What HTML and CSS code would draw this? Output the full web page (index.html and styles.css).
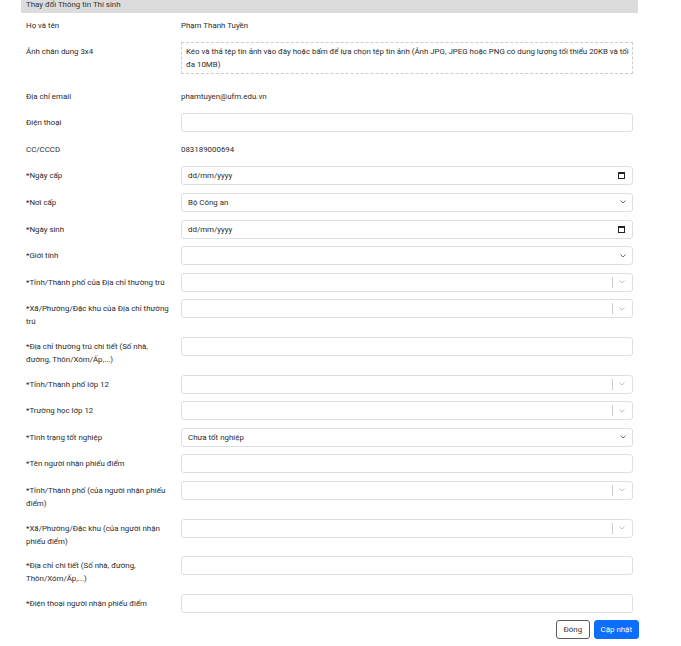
FILE: index.html
```html
<!DOCTYPE html>
<html>
<head>
<meta charset="utf-8">
<title>Thay đổi Thông tin Thí sinh</title>
<link rel="stylesheet" href="styles.css">
</head>
<body>
<div class="modal">
  <div class="modal-title">Thay đổi Thông tin Thí sinh</div>

  <div class="modal-body">
    <div class="row">
      <div class="label">Họ và tên</div>
      <div class="value">Phạm Thanh Tuyền</div>
    </div>
    <div class="row row-photo">
      <div class="label">Ảnh chân dung 3x4</div>
      <div class="dropzone">Kéo và thả tệp tin ảnh vào đây hoặc bấm để lựa chọn tệp tin ảnh (Ảnh JPG, JPEG hoặc PNG có dung lượng tối thiểu 20KB và tối đa 10MB)</div>
    </div>
    <div class="row">
      <div class="label">Địa chỉ email</div>
      <div class="value">phamtuyen@ufm.edu.vn</div>
    </div>
    <div class="row">
      <div class="label">Điện thoại</div>
      <div class="field"></div>
    </div>
    <div class="row">
      <div class="label">CC/CCCD</div>
      <div class="value">083189000694</div>
    </div>
    <div class="row">
      <div class="label">*Ngày cấp</div>
      <div class="field">
        <span class="field-text">dd/mm/yyyy</span>
        <svg class="icon-date" width="7" height="7" viewBox="0 0 7 7"><rect x="0.5" y="0.5" width="6" height="6" fill="none" stroke="#222"/><rect x="0" y="0" width="7" height="2" fill="#222"/></svg>
      </div>
    </div>
    <div class="row">
      <div class="label">*Nơi cấp</div>
      <div class="field">
        <span class="field-text">Bộ Công an</span>
        <svg class="icon-chevron" width="6" height="4" viewBox="0 0 6 4"><polyline points="0.5,0.5 3,3 5.5,0.5" fill="none" stroke="#666" stroke-width="0.9"/></svg>
      </div>
    </div>
    <div class="row">
      <div class="label">*Ngày sinh</div>
      <div class="field">
        <span class="field-text">dd/mm/yyyy</span>
        <svg class="icon-date" width="7" height="7" viewBox="0 0 7 7"><rect x="0.5" y="0.5" width="6" height="6" fill="none" stroke="#222"/><rect x="0" y="0" width="7" height="2" fill="#222"/></svg>
      </div>
    </div>
    <div class="row">
      <div class="label">*Giới tính</div>
      <div class="field">
        <span class="field-text"></span>
        <svg class="icon-chevron" width="6" height="4" viewBox="0 0 6 4"><polyline points="0.5,0.5 3,3 5.5,0.5" fill="none" stroke="#666" stroke-width="0.9"/></svg>
      </div>
    </div>
    <div class="row">
      <div class="label">*Tỉnh/Thành phố của Địa chỉ thường trú</div>
      <div class="field">
        <span class="field-text"></span>
        <span class="separator"></span>
        <svg class="icon-chevron light" width="6" height="4" viewBox="0 0 6 4"><polyline points="0.5,0.5 3,3 5.5,0.5" fill="none" stroke="#bbb" stroke-width="0.9"/></svg>
      </div>
    </div>
    <div class="row">
      <div class="label">*Xã/Phường/Đặc khu của Địa chỉ thường trú</div>
      <div class="field">
        <span class="field-text"></span>
        <span class="separator"></span>
        <svg class="icon-chevron light" width="6" height="4" viewBox="0 0 6 4"><polyline points="0.5,0.5 3,3 5.5,0.5" fill="none" stroke="#bbb" stroke-width="0.9"/></svg>
      </div>
    </div>
    <div class="row">
      <div class="label">*Địa chỉ thường trú chi tiết (Số nhà, đường, Thôn/Xóm/Ấp,...)</div>
      <div class="field"></div>
    </div>
    <div class="row">
      <div class="label">*Tỉnh/Thành phố lớp 12</div>
      <div class="field">
        <span class="field-text"></span>
        <span class="separator"></span>
        <svg class="icon-chevron light" width="6" height="4" viewBox="0 0 6 4"><polyline points="0.5,0.5 3,3 5.5,0.5" fill="none" stroke="#bbb" stroke-width="0.9"/></svg>
      </div>
    </div>
    <div class="row">
      <div class="label">*Trường học lớp 12</div>
      <div class="field">
        <span class="field-text"></span>
        <span class="separator"></span>
        <svg class="icon-chevron light" width="6" height="4" viewBox="0 0 6 4"><polyline points="0.5,0.5 3,3 5.5,0.5" fill="none" stroke="#bbb" stroke-width="0.9"/></svg>
      </div>
    </div>
    <div class="row">
      <div class="label">*Tình trạng tốt nghiệp</div>
      <div class="field">
        <span class="field-text">Chưa tốt nghiệp</span>
        <svg class="icon-chevron" width="6" height="4" viewBox="0 0 6 4"><polyline points="0.5,0.5 3,3 5.5,0.5" fill="none" stroke="#666" stroke-width="0.9"/></svg>
      </div>
    </div>
    <div class="row">
      <div class="label">*Tên người nhận phiếu điểm</div>
      <div class="field"></div>
    </div>
    <div class="row">
      <div class="label">*Tỉnh/Thành phố (của người nhận phiếu điểm)</div>
      <div class="field">
        <span class="field-text"></span>
        <span class="separator"></span>
        <svg class="icon-chevron light" width="6" height="4" viewBox="0 0 6 4"><polyline points="0.5,0.5 3,3 5.5,0.5" fill="none" stroke="#bbb" stroke-width="0.9"/></svg>
      </div>
    </div>
    <div class="row">
      <div class="label">*Xã/Phường/Đặc khu (của người nhận phiếu điểm)</div>
      <div class="field">
        <span class="field-text"></span>
        <span class="separator"></span>
        <svg class="icon-chevron light" width="6" height="4" viewBox="0 0 6 4"><polyline points="0.5,0.5 3,3 5.5,0.5" fill="none" stroke="#bbb" stroke-width="0.9"/></svg>
      </div>
    </div>
    <div class="row">
      <div class="label">*Địa chỉ chi tiết (Số nhà, đường, Thôn/Xóm/Ấp,...)</div>
      <div class="field"></div>
    </div>
    <div class="row">
      <div class="label">*Điện thoại người nhận phiếu điểm</div>
      <div class="field"></div>
    </div>
  </div>

  <div class="modal-footer">
    <button type="button" class="btn btn-close">Đóng</button>
    <button type="button" class="btn btn-primary">Cập nhật</button>
  </div>
</div>
</body>
</html>
```

FILE: styles.css
```css
body {
  margin: 0;
  background: #fff;
  font-family: Roboto, "Noto Sans", sans-serif;
  font-size: 7.9px;
  line-height: 13px;
  color: #2b2b2b;
}

.modal {
  width: 617px;
  margin-left: 21px;
}

.modal-title {
  height: 13px;
  padding-left: 5px;
  line-height: 10px;
  background: #dcdcdc;
  color: #333;
}

.modal-body {
  padding: 2.5px 5px 0 5px;
}

.row {
  display: grid;
  grid-template-columns: 155px 452px;
  align-items: start;
  margin-bottom: 7.6px;
}

.row-photo {
  margin-bottom: 12.5px;
}

.label {
  padding: 3px 8px 1px 0;
}

.value {
  padding: 3px 0;
}

.dropzone {
  height: 32px;
  box-sizing: border-box;
  padding: 3px 3px 3px 4px;
  border: 1px dashed #ccc;
  line-height: 12.5px;
}

.field {
  display: flex;
  align-items: center;
  height: 19px;
  box-sizing: border-box;
  padding: 0 6px;
  border: 1px solid #dcdfe3;
  border-radius: 3px;
}

.field-text {
  flex: 1;
}

.icon-date {
  margin-right: 1px;
}

.separator {
  width: 1px;
  height: 11px;
  margin-right: 6px;
  background: #ccc;
}

.icon-chevron.light {
  margin-right: 1px;
}

.modal-footer {
  display: flex;
  justify-content: flex-end;
  gap: 4px;
  margin-right: -1px;
}

.btn {
  height: 19px;
  padding: 0 6px;
  border-radius: 3px;
  font-family: inherit;
  font-size: 7.9px;
  line-height: 13px;
}

.btn-close {
  padding: 0 6.5px;
  background: #fff;
  border: 1px solid #5c5c5c;
  color: #333;
}

.btn-primary {
  background: #0d6efd;
  border: 1px solid #0d6efd;
  color: #fff;
}
```
